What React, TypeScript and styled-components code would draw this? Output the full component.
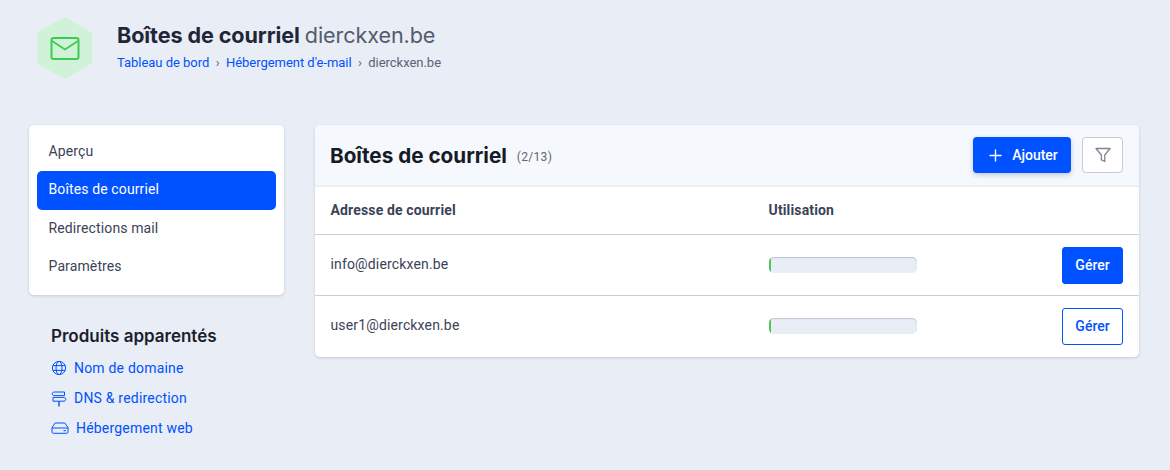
import React from 'react';
import styled, { createGlobalStyle } from 'styled-components';
import { Plus } from 'lucide-react';

const GlobalStyle = createGlobalStyle`
  html, body { margin: 0; padding: 0; background: #e9edf5; }
  body { font-family: Roboto, "Liberation Sans", sans-serif; }
  * { box-sizing: border-box; }
`;

const HEADING = `Inter, "Liberation Sans", sans-serif`;
const BLUE = '#0051ff';

const Page = styled.div`
  width: 1170px;
  height: 470px;
  padding: 17px 31px 0 29px;
  overflow: hidden;
`;
const PageHeader = styled.header`
  display: flex;
  align-items: flex-start;
  gap: 25px;
  padding-left: 8px;
  height: 108px;
`;
const TitleBlock = styled.div`
  padding-top: 5px;
`;
const Title = styled.h1`
  margin: 0;
  font-family: ${HEADING};
  font-size: 21.6px;
  line-height: 27px;
  font-weight: 700;
  color: #1f2638;
  letter-spacing: -0.1px;
`;
const TitleDomain = styled.span`
  font-weight: 400;
  color: #545b6d;
`;
const Crumbs = styled.nav`
  display: flex;
  align-items: center;
  gap: 6.4px;
  margin-top: 5px;
  font-size: 13px;
  line-height: 18px;
  letter-spacing: -0.03px;
`;
const CrumbLink = styled.a`
  color: ${BLUE};
`;
const CrumbSep = styled.span`
  color: #5a6275;
`;
const CrumbCurrent = styled.span`
  color: #5a6275;
`;
const Columns = styled.div`
  display: grid;
  grid-template-columns: 255px 824px;
  gap: 31px;
  align-items: start;
`;
const SideMenu = styled.div`
  background: #fff;
  border-radius: 5px;
  box-shadow: 0 1px 3px rgba(60, 72, 100, 0.2);
  padding: 8px 8px 9px;
  display: flex;
  flex-direction: column;
`;
const MenuItem = styled.a<{ $active?: boolean }>`
  display: flex;
  align-items: center;
  height: ${(p) => (p.$active ? '39px' : '38px')};
  padding: 0 0 3px 11.5px;
  border-radius: 5px;
  font-size: 14px;
  letter-spacing: 0.12px;
  color: ${(p) => (p.$active ? '#fff' : '#3b4357')};
  background: ${(p) => (p.$active ? BLUE : 'transparent')};
`;
const Related = styled.div`
  padding: 31px 0 0 22px;
`;
const RelatedTitle = styled.h3`
  margin: 0 0 7px;
  font-family: ${HEADING};
  font-size: 17px;
  line-height: 20px;
  font-weight: 600;
  color: #1a1f2e;
`;
const RelatedLink = styled.a`
  display: flex;
  align-items: center;
  gap: 7px;
  height: 30px;
  font-size: 14px;
  letter-spacing: 0.2px;
  color: ${BLUE};
`;
const Card = styled.section`
  background: #fff;
  border-radius: 5px;
  box-shadow: 0 1px 3px rgba(60, 72, 100, 0.2);
  overflow: hidden;
  padding-bottom: 1px;
`;
const CardHeader = styled.div`
  height: 62px;
  display: flex;
  align-items: center;
  padding: 0 16px 0 15px;
  background: #f5f8fc;
  border-bottom: 2px solid #eeeff1;
`;
const CardTitle = styled.h2`
  margin: 0;
  font-family: ${HEADING};
  font-size: 20.7px;
  font-weight: 700;
  color: #171b27;
`;
const Count = styled.span`
  margin: 3px 0 0 10px;
  font-size: 12px;
  letter-spacing: 0.3px;
  color: #5f6676;
`;
const HeaderActions = styled.div`
  margin-left: auto;
  display: flex;
  gap: 11px;
`;
const AddButton = styled.button`
  width: 98px;
  height: 36px;
  border: 0;
  border-radius: 4px;
  background: ${BLUE};
  color: #fff;
  font: 500 14px Roboto, sans-serif;
  display: flex;
  align-items: center;
  justify-content: center;
  gap: 7px;
  box-shadow: 0 2px 5px rgba(40, 60, 110, 0.25);
`;
const FilterButton = styled.button`
  width: 41px;
  height: 36px;
  border: 1px solid #c3cbd8;
  border-radius: 4px;
  background: #fff;
  display: flex;
  align-items: center;
  justify-content: center;
  padding: 0;
`;
const Row = styled.div<{ $head?: boolean }>`
  display: grid;
  grid-template-columns: 438px 1fr auto;
  align-items: center;
  height: ${(p) => (p.$head ? '47px' : '61px')};
  padding: 0 16px 0 15.5px;
  font-size: 14px;
  letter-spacing: 0.15px;
  font-weight: ${(p) => (p.$head ? 700 : 400)};
  color: #3b4357;
  & + & {
    border-top: 1px solid #c8ced8;
  }
`;
const CellText = styled.span`
  padding-bottom: 2px;
`;
const Usage = styled.div`
  width: 148px;
  height: 16px;
  margin-left: 0.5px;
  border-radius: 5px;
  overflow: hidden;
  background: #e9edf5;
  box-shadow: inset 0 1px 1px rgba(60, 72, 100, 0.25);
`;
const UsageFill = styled.div`
  height: 100%;
  background: #4cc654;
`;
const ManageButton = styled.button<{ $outline?: boolean }>`
  width: 61px;
  height: 37px;
  border-radius: 3px;
  border: 1px solid ${BLUE};
  background: ${(p) => (p.$outline ? '#fff' : BLUE)};
  color: ${(p) => (p.$outline ? BLUE : '#fff')};
  font: 500 14px Roboto, sans-serif;
  padding: 0;
`;

const HexIcon = () => (
  <svg width="55" height="62" viewBox="0 0 55 62" style={{ flex: 'none' }}>
    <path
      d="M25 1.2a5 5 0 0 1 5 0l22.5 13a5 5 0 0 1 2.5 4.3v25a5 5 0 0 1-2.5 4.3L30 60.8a5 5 0 0 1-5 0L2.5 47.8A5 5 0 0 1 0 43.5v-25a5 5 0 0 1 2.5-4.3z"
      fill="#cff2d8"
    />
    <rect x="14.5" y="21" width="27" height="21" rx="2" fill="none" stroke="#3ecb4f" strokeWidth="2" />
    <path d="M15 24l13 8.5 13-8.5" fill="none" stroke="#3ecb4f" strokeWidth="1.8" />
  </svg>
);

const GlobeIcon = () => (
  <svg width="16" height="16" viewBox="0 0 16 16" fill="none" stroke={BLUE} strokeWidth="1">
    <circle cx="8" cy="8" r="6.6" />
    <ellipse cx="8" cy="8" rx="3" ry="6.6" />
    <path d="M1.8 5.6h12.4M1.8 10.4h12.4" />
  </svg>
);

const SignIcon = () => (
  <svg width="16" height="16" viewBox="0 0 16 16" fill="none" stroke={BLUE} strokeWidth="1" style={{ marginTop: 1 }}>
    <path d="M2.5 1h11v3.6H2.5L1 2.8z" />
    <path d="M2 6.4h11.5l1.5 1.9-1.5 1.9H2z" />
    <path d="M8 10.5v5" strokeWidth="1.4" />
  </svg>
);

const DriveIcon = () => (
  <svg width="18" height="12" viewBox="0 0 18 12" fill="none" stroke={BLUE} strokeWidth="1">
    <path d="M4.2 1h9.6L17 5.5v4.3a1.5 1.5 0 0 1-1.5 1.5h-13A1.5 1.5 0 0 1 1 9.8V5.5z" />
    <path d="M1 6h16M12.5 8.7h2.5" />
  </svg>
);

const FunnelIcon = () => (
  <svg width="16" height="16" viewBox="0 0 16 16" fill="none" stroke="#808590" strokeWidth="1.3" strokeLinejoin="round">
    <path d="M1 1.5h14L9.8 8v6.5l-3.4-1.6V8z" />
  </svg>
);

const mailboxes = [
  { mail: 'info@dierckxen.be', used: 2 },
  { mail: 'user1@dierckxen.be', used: 2 },
];

const App = () => (
  <Page>
    <GlobalStyle />
    <PageHeader>
      <HexIcon />
      <TitleBlock>
        <Title>
          Boîtes de courriel <TitleDomain>dierckxen.be</TitleDomain>
        </Title>
        <Crumbs>
          <CrumbLink>Tableau de bord</CrumbLink>
          <CrumbSep>›</CrumbSep>
          <CrumbLink>Hébergement d'e-mail</CrumbLink>
          <CrumbSep>›</CrumbSep>
          <CrumbCurrent>dierckxen.be</CrumbCurrent>
        </Crumbs>
      </TitleBlock>
    </PageHeader>
    <Columns>
      <aside>
        <SideMenu>
          <MenuItem>Aperçu</MenuItem>
          <MenuItem $active>Boîtes de courriel</MenuItem>
          <MenuItem>Redirections mail</MenuItem>
          <MenuItem>Paramètres</MenuItem>
        </SideMenu>
        <Related>
          <RelatedTitle>Produits apparentés</RelatedTitle>
          <RelatedLink>
            <GlobeIcon />
            Nom de domaine
          </RelatedLink>
          <RelatedLink>
            <SignIcon />
            DNS &amp; redirection
          </RelatedLink>
          <RelatedLink>
            <DriveIcon />
            Hébergement web
          </RelatedLink>
        </Related>
      </aside>
      <Card>
        <CardHeader>
          <CardTitle>Boîtes de courriel</CardTitle>
          <Count>(2/13)</Count>
          <HeaderActions>
            <AddButton>
              <Plus size={19} strokeWidth={1.7} />
              Ajouter
            </AddButton>
            <FilterButton>
              <FunnelIcon />
            </FilterButton>
          </HeaderActions>
        </CardHeader>
        <Row $head>
          <CellText>Adresse de courriel</CellText>
          <CellText>Utilisation</CellText>
        </Row>
        {mailboxes.map((box, i) => (
          <Row key={box.mail}>
            <CellText>{box.mail}</CellText>
            <Usage>
              <UsageFill style={{ width: box.used }} />
            </Usage>
            <ManageButton $outline={i > 0}>Gérer</ManageButton>
          </Row>
        ))}
      </Card>
    </Columns>
  </Page>
);

export default App;
